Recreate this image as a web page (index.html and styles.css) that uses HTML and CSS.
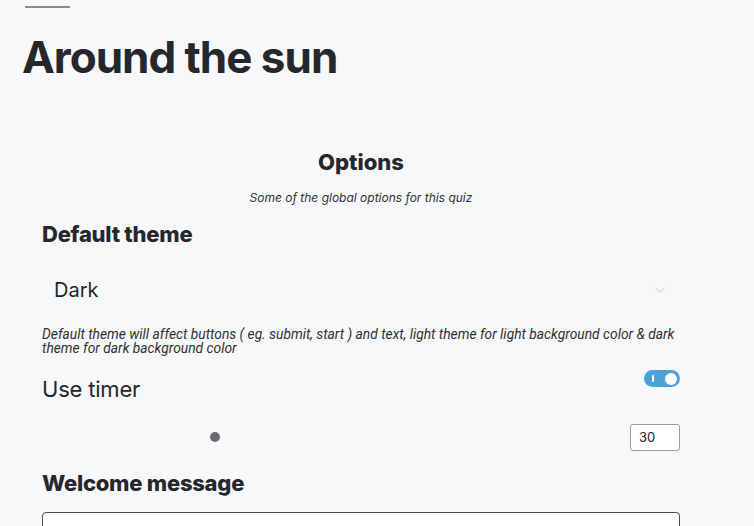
FILE: index.html
```html
<!DOCTYPE html>
<html>
<head>
<meta charset="utf-8">
<link rel="stylesheet" href="styles.css">
</head>
<body>
<div class="page">
  <div class="topline"></div>
  <h1 class="title">Around the sun</h1>
  <section class="options">
    <h2 class="options-title">Options</h2>
    <p class="options-sub">Some of the global options for this quiz</p>
    <h3 class="label">Default theme</h3>
    <div class="select">
      <span>Dark</span>
      <svg class="chev" width="12" height="8" viewBox="0 0 12 8"><path d="M1 1.5 L6 6 L11 1.5" fill="none" stroke="#c4c6cc" stroke-width="1"/></svg>
    </div>
    <p class="help">Default theme will affect buttons ( eg. submit, start ) and text, light theme for light background color &amp; dark theme for dark background color</p>
    <div class="timer-row">
      <span class="timer-label">Use timer</span>
      <div class="toggle"><span class="bar"></span><span class="knob"></span></div>
    </div>
    <div class="slider-row">
      <div class="slider"><span class="thumb"></span></div>
      <div class="num">30</div>
    </div>
    <h3 class="label welcome">Welcome message</h3>
    <div class="textarea"></div>
  </section>
</div>
</body>
</html>
```
FILE: styles.css
```css
html, body { margin: 0; padding: 0; }
body {
  background: #f7f8fa;
  font-family: Inter, "Noto Sans", sans-serif;
  color: #26272b;
  width: 754px;
  height: 526px;
  overflow: hidden;
}
.page { padding: 0 0 0 22px; }
.topline { width: 45px; height: 2px; background: #8a8b8e; margin: 6px 0 0 3px; }
.title {
  margin: 25px 0 0 0;
  font-size: 44px;
  line-height: 48px;
  font-weight: 700;
  letter-spacing: -1px;
  color: #26272b;
}
.options { width: 638px; margin: 68px 0 0 20px; }
.options-title {
  margin: 0;
  text-align: center;
  font-size: 22px;
  line-height: 26px;
  font-weight: 800;
}
.options-sub {
  margin: 16px 0 0 0;
  text-align: center;
  font-style: italic;
  font-size: 12px;
  line-height: 14px;
  color: #2f3035;
}
.label {
  margin: 16px 0 0 0;
  font-size: 22px;
  line-height: 26px;
  font-weight: 800;
  letter-spacing: -0.25px;
}
.select {
  display: flex;
  justify-content: space-between;
  align-items: center;
  margin-top: 30px;
  padding: 0 12px;
  height: 26px;
  font-size: 20px;
  color: #26272b;
}
.chev { margin-right: 2px; }
.help {
  margin: 24px 0 0 0;
  font-style: italic;
  font-size: 13.8px;
  line-height: 14px;
  color: #2f3035;
  font-family: Roboto, sans-serif;
}
.timer-row {
  display: flex;
  justify-content: space-between;
  align-items: flex-start;
  margin-top: 15px;
}
.timer-label { font-size: 22px; line-height: 26px; margin-top: 6px; letter-spacing: -0.2px; }
.toggle {
  position: relative;
  width: 36px;
  height: 17px;
  border-radius: 9px;
  background: #4aa3d4;
}
.toggle .bar {
  position: absolute;
  left: 8px; top: 5px;
  width: 2px; height: 7px;
  background: #fff;
  border-radius: 1px;
}
.toggle .knob {
  position: absolute;
  right: 3px; top: 2.5px;
  width: 12px; height: 12px;
  border-radius: 50%;
  background: #fff;
}
.slider-row {
  display: flex;
  align-items: center;
  justify-content: space-between;
  margin-top: 22px;
}
.slider { flex: 1; position: relative; height: 27px; }
.thumb {
  position: absolute;
  left: 168px; top: 8px;
  width: 10px; height: 10px;
  border-radius: 50%;
  background: #6a6b70;
}
.num {
  width: 40px;
  height: 25px;
  border: 1px solid #9a9ca2;
  border-radius: 3px;
  padding-left: 8px;
  font-size: 13px;
  line-height: 25px;
  color: #202124;
  background: #fff;
}
.label.welcome { margin-top: 19px; }
.textarea {
  margin-top: 16px;
  height: 60px;
  border: 1px solid #4a4b50;
  border-radius: 4px;
  background: #fff;
}
```
